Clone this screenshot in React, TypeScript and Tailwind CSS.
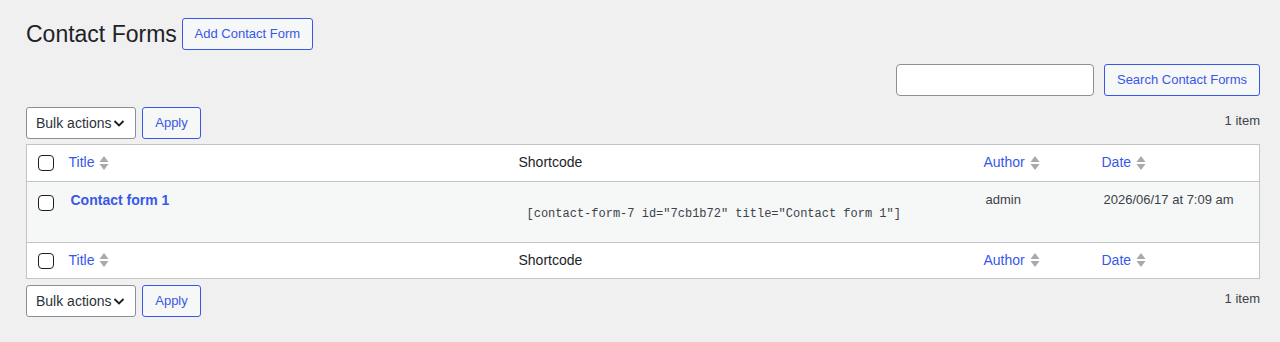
import React from 'react';

const BLUE = 'text-[#3858e9]';

const SortIcon: React.FC = () => (
  <svg width="10" height="16" viewBox="0 0 10 16" className="ml-[5px] shrink-0">
    <path d="M5 1 L9.5 7 H0.5 Z" fill="#a7aaad" />
    <path d="M5 15 L9.5 9 H0.5 Z" fill="#a7aaad" />
  </svg>
);

const Checkbox: React.FC = () => (
  <div className="w-4 h-4 rounded-[4px] border border-[#1e1e1e] bg-white" />
);

const Button: React.FC<{ label: string; className?: string }> = ({ label, className = '' }) => (
  <button className={`h-[32px] px-[10px] rounded-[3px] border border-[#3858e9] bg-[#f6f7f7] text-[13px] ${BLUE} ${className}`}>
    {label}
  </button>
);

const TableNav: React.FC = () => (
  <div className="flex items-center">
    <div className="w-[110px] h-[32px] rounded-[3px] border border-[#8c8f94] bg-white flex items-center pl-[9px] text-[14px] text-[#2c3338]">
      <span>Bulk actions</span>
      <svg width="14" height="14" viewBox="0 0 14 14" className="ml-[1px]">
        <path d="M2.5 5 L7 9.5 L11.5 5" fill="none" stroke="#1e1e1e" strokeWidth="1.8" />
      </svg>
    </div>
    <Button label="Apply" className="ml-[6px] w-[59px]" />
    <span className="ml-auto pb-[5px] text-[13px] text-[#3c434a]">1 item</span>
  </div>
);

const HeadRow: React.FC<{ top?: boolean }> = ({ top }) => (
  <tr className={`${top ? 'h-[37px] border-b' : 'h-[36px] border-t'} bg-white border-[#c3c4c7]`}>
    <td className="pl-[11px] align-middle"><Checkbox /></td>
    <td className="pl-[9px] pb-[1px]"><span className={`flex items-center ${BLUE}`}>Title<SortIcon /></span></td>
    <td className="pl-[9px] pb-[1px] text-[#1d2327]">Shortcode</td>
    <td className="pl-[9px] pb-[1px]"><span className={`flex items-center ${BLUE}`}>Author<SortIcon /></span></td>
    <td className="pl-[9px] pb-[1px]"><span className={`flex items-center ${BLUE}`}>Date<SortIcon /></span></td>
  </tr>
);

export default function App() {
  return (
    <div className="min-h-screen bg-[#f0f0f1] pl-[26px] pr-[20px] pt-[18px] text-[14px] font-['Liberation_Sans',Arial,sans-serif]">
      <div className="flex items-center gap-[5px]">
        <h1 className="text-[23px] text-[#1d2327] leading-none">Contact Forms</h1>
        <Button label="Add Contact Form" className="h-[31px] w-[131px]" />
      </div>

      <div className="flex justify-end gap-[10px] mt-[14px]">
        <div className="w-[198px] h-[32px] rounded-[4px] border border-[#8c8f94] bg-white" />
        <Button label="Search Contact Forms" className="w-[156px]" />
      </div>

      <div className="mt-[11px]"><TableNav /></div>

      <table className="w-full table-fixed border border-[#c3c4c7] mt-[5px] border-collapse">
        <colgroup>
          <col className="w-[33px]" />
          <col className="w-[450px]" />
          <col className="w-[465px]" />
          <col className="w-[118px]" />
          <col />
        </colgroup>
        <thead><HeadRow top /></thead>
        <tbody>
          <tr className="h-[61px] bg-[#f6f7f7] align-top">
            <td className="pl-[11px] pt-[13px]"><Checkbox /></td>
            <td className="pl-[11px] pt-[8px]">
              <span className={`font-bold ${BLUE}`}>Contact form 1</span>
            </td>
            <td className="pl-[17px] pt-[20px]">
              <span className="font-['Liberation_Mono',monospace] text-[12px] text-[#3c434a] whitespace-nowrap">
                [contact-form-7 id="7cb1b72" title="Contact form 1"]
              </span>
            </td>
            <td className="pl-[11px] pt-[8px] text-[13px] text-[#3c434a]">admin</td>
            <td className="pl-[11px] pt-[8px] text-[13px] text-[#3c434a]">2026/06/17 at 7:09 am</td>
          </tr>
        </tbody>
        <tfoot><HeadRow /></tfoot>
      </table>

      <div className="mt-[6px]"><TableNav /></div>
    </div>
  );
}
